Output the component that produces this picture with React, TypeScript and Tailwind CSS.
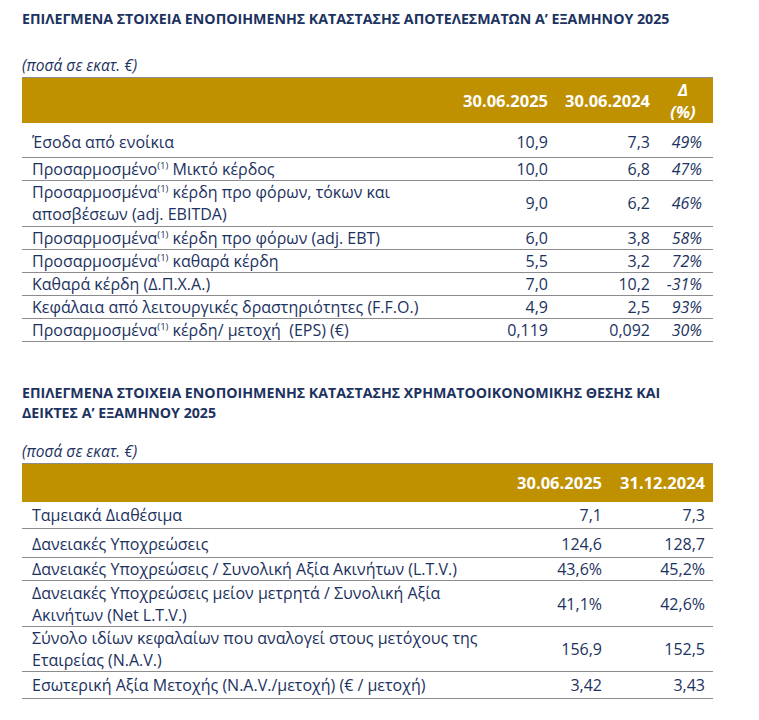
import React from 'react';

const NAVY = 'text-[#1c3260]';

const Sup = () => <span className="relative -top-[6px] text-[9.5px] leading-none">(1)</span>;

type Row1 = { label: React.ReactNode; a: string; b: string; d: string; cls?: string };

const results: Row1[] = [
  { label: 'Έσοδα από ενοίκια', a: '10,9', b: '7,3', d: '49%', cls: 'pt-[8px] pb-[4px]' },
  { label: <>Προσαρμοσμένο<Sup /> Μικτό κέρδος</>, a: '10,0', b: '6,8', d: '47%' },
  {
    label: <>Προσαρμοσμένα<Sup /> κέρδη προ φόρων, τόκων και<br />αποσβέσεων (adj. EBITDA)</>,
    a: '9,0', b: '6,2', d: '46%', cls: 'pb-[1px]',
  },
  { label: <>Προσαρμοσμένα<Sup /> κέρδη προ φόρων (adj. EBT)</>, a: '6,0', b: '3,8', d: '58%' },
  { label: <>Προσαρμοσμένα<Sup /> καθαρά κέρδη</>, a: '5,5', b: '3,2', d: '72%' },
  { label: 'Καθαρά κέρδη (Δ.Π.Χ.Α.)', a: '7,0', b: '10,2', d: '-31%' },
  { label: 'Κεφάλαια από λειτουργικές δραστηριότητες (F.F.O.)', a: '4,9', b: '2,5', d: '93%' },
  { label: <>Προσαρμοσμένα<Sup /> κέρδη/ μετοχή&nbsp; (EPS) (€)</>, a: '0,119', b: '0,092', d: '30%' },
];

type Row2 = { label: React.ReactNode; a: string; b: string; cls?: string };

const position: Row2[] = [
  { label: 'Ταμειακά Διαθέσιμα', a: '7,1', b: '7,3', cls: 'py-[2px]' },
  { label: 'Δανειακές Υποχρεώσεις', a: '124,6', b: '128,7', cls: 'pt-[4px] pb-[2px]' },
  { label: 'Δανειακές Υποχρεώσεις / Συνολική Αξία Ακινήτων (L.T.V.)', a: '43,6%', b: '45,2%' },
  {
    label: <>Δανειακές Υποχρεώσεις μείον μετρητά / Συνολική Αξία<br />Ακινήτων (Net L.T.V.)</>,
    a: '41,1%', b: '42,6%', cls: 'pt-[1px]',
  },
  {
    label: <>Σύνολο ιδίων κεφαλαίων που αναλογεί στους μετόχους της<br />Εταιρείας (N.A.V.)</>,
    a: '156,9', b: '152,5',
  },
  { label: 'Εσωτερική Αξία Μετοχής (N.A.V./μετοχή) (€ / μετοχή)', a: '3,42', b: '3,43', cls: 'py-[2px]' },
];

const Title = ({ children, cls }: { children: React.ReactNode; cls: string }) => (
  <h2 className={`${cls} text-[14.2px] leading-[20px] font-bold ${NAVY}`}>{children}</h2>
);

const Unit = ({ cls }: { cls: string }) => (
  <p className={`${cls} text-[15.5px] leading-[20px] italic ${NAVY}`}>(ποσά σε εκατ. €)</p>
);

export default function App() {
  return (
    <div className="w-[759px] h-[720px] bg-white pl-[22px] font-['Open_Sans',sans-serif] overflow-hidden">
      <Title cls="pt-[9px]">ΕΠΙΛΕΓΜΕΝΑ ΣΤΟΙΧΕΙΑ ΕΝΟΠΟΙΗΜΕΝΗΣ ΚΑΤΑΣΤΑΣΗΣ ΑΠΟΤΕΛΕΣΜΑΤΩΝ Α’ ΕΞΑΜΗΝΟΥ 2025</Title>
      <Unit cls="mt-[26px]" />

      {/* results table */}
      <div className={`mt-[2px] w-[691px] text-[16px] leading-[22px] ${NAVY}`}>
        <div className="grid grid-cols-[1fr_95px_102px_58px] items-center h-[46px] bg-[#bf9000] border-t border-[#8c8c8c] text-white font-bold text-[16.5px]">
          <div />
          <div className="text-right pr-[5px]">30.06.2025</div>
          <div className="text-right pr-[5px]">30.06.2024</div>
          <div className="text-center italic leading-[22px] pr-[2px]">
            Δ<br />(%)
          </div>
        </div>
        {results.map((r, i) => (
          <div
            key={i}
            className={`grid grid-cols-[1fr_95px_102px_58px] items-center border-b border-[#8c8c8c] ${r.cls ?? ''}`}
          >
            <div className="pl-[10px]">{r.label}</div>
            <div className="text-right pr-[5px]">{r.a}</div>
            <div className="text-right pr-[5px]">{r.b}</div>
            <div className="text-right pr-[11px] italic">{r.d}</div>
          </div>
        ))}
      </div>

      <Title cls="mt-[41px]">
        ΕΠΙΛΕΓΜΕΝΑ ΣΤΟΙΧΕΙΑ ΕΝΟΠΟΙΗΜΕΝΗΣ ΚΑΤΑΣΤΑΣΗΣ ΧΡΗΜΑΤΟΟΙΚΟΝΟΜΙΚΗΣ ΘΕΣΗΣ ΚΑΙ
        <br />
        ΔΕΙΚΤΕΣ Α’ ΕΞΑΜΗΝΟΥ 2025
      </Title>
      <Unit cls="mt-[18px]" />

      {/* financial position table */}
      <div className={`mt-[2px] w-[691px] text-[16px] leading-[22px] ${NAVY}`}>
        <div className="grid grid-cols-[1fr_100px_106px] items-center h-[39px] bg-[#bf9000] border-t border-[#8c8c8c] text-white font-bold text-[16.5px]">
          <div />
          <div className="text-right pr-[5px]">30.06.2025</div>
          <div className="text-right pr-[8px]">31.12.2024</div>
        </div>
        {position.map((r, i) => (
          <div
            key={i}
            className={`grid grid-cols-[1fr_100px_106px] items-center border-b border-[#8c8c8c] ${r.cls ?? ''}`}
          >
            <div className="pl-[10px]">{r.label}</div>
            <div className="text-right pr-[5px]">{r.a}</div>
            <div className="text-right pr-[8px]">{r.b}</div>
          </div>
        ))}
      </div>
    </div>
  );
}
